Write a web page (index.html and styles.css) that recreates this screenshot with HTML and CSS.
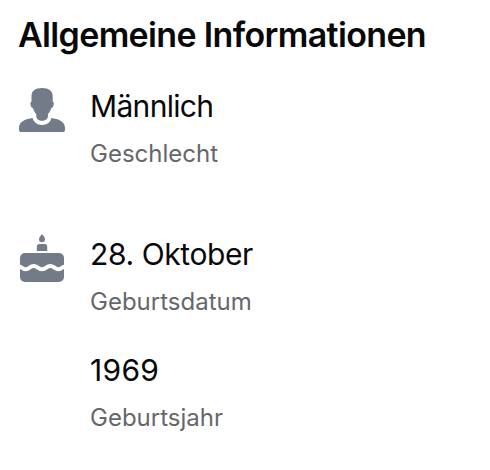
FILE: index.html
```html
<!DOCTYPE html>
<html lang="de">
<head>
<meta charset="utf-8">
<title>Allgemeine Informationen</title>
<link rel="stylesheet" href="styles.css">
</head>
<body>
<main class="info">
<h1 class="heading">Allgemeine Informationen</h1>
<section class="entry">
<svg class="icon" viewBox="0 0 48 52"><path d="M24 4c-7 0-10.500 3-10.500 8v5.500c-1 .3-1.200 1.500-1 3 .3 2 1.100 3.300 2.500 3.600.6 2.500 1.600 4.400 3.200 5.800v1.500c0 3.300 2.500 5.300 5.900 5.300s5.900-2 5.900-5.300v-1.500c1.600-1.400 2.600-3.300 3.200-5.800 1.400-.3 2.200-1.600 2.500-3.600.2-1.500 0-2.700-1-3V12c0-5-3.700-8-10.700-8Z"/><path d="M14.700 34c.8 4 4.300 6.900 9.400 6.900s8.600-2.900 9.200-6.900C40.500 34.900 47 37.500 47 44v1.700c0 1.500-.8 2.300-2.300 2.300H3.300C1.800 48 1 47.200 1 45.700V44c0-6.500 6.500-9.100 13.700-10Z"/></svg>
<dl class="facts"><div class="fact"><dt class="value">Männlich</dt><dd class="label">Geschlecht</dd></div></dl>
</section>
<section class="entry birthday">
<svg class="icon" viewBox="0 0 48 52"><path d="M24 2c2 2.600 3 4 3 5.200a3 3 0 0 1-6 0C21 6 22 4.600 24 2Z"/><path d="M18.800 19v-4.500q0-2.500 2.500-2.500h5.400q2.500 0 2.500 2.500V19Z"/><rect x="2" y="21" width="44" height="29" rx="5"/><path class="icing" d="M1 34.500c3 0 3 2.800 6.500 2.800 4.100 0 4.100-3.200 8.200-3.200s4.100 3.200 8.300 3.200 4.200-3.200 8.300-3.200 4.100 3.200 8.200 3.200c3.500 0 3.500-2.800 6.500-2.800"/></svg>
<dl class="facts"><div class="fact"><dt class="value date">28. Oktober</dt><dd class="label">Geburtsdatum</dd></div><div class="fact"><dt class="value year">1969</dt><dd class="label">Geburtsjahr</dd></div></dl>
</section>
</main>
</body>
</html>
```
FILE: styles.css
```css
*{box-sizing:border-box}
body{margin:0;background:#fff;color:#080809;font-family:Inter,sans-serif}
.info{padding:14px 18px}
.heading{margin:0;font-size:34px;line-height:42px;font-weight:600;letter-spacing:-.65px}
.entry{display:flex;gap:24px;margin-top:28px}
.birthday{margin-top:59px}
.icon{width:48px;height:52px;flex:none;fill:#737b89}
.icing{fill:none;stroke:#fff;stroke-width:4}
.facts{margin:0;display:grid;gap:28px}
.value{font-size:30px;line-height:44px;letter-spacing:-.68px}
.date{letter-spacing:-.4px}
.year{letter-spacing:.3px}
.label{margin:6px 0 0;padding-top:1px;font-size:24px;line-height:37px;color:#65676b}
.fact{padding-bottom:1px}
.facts{row-gap:27px}
```
